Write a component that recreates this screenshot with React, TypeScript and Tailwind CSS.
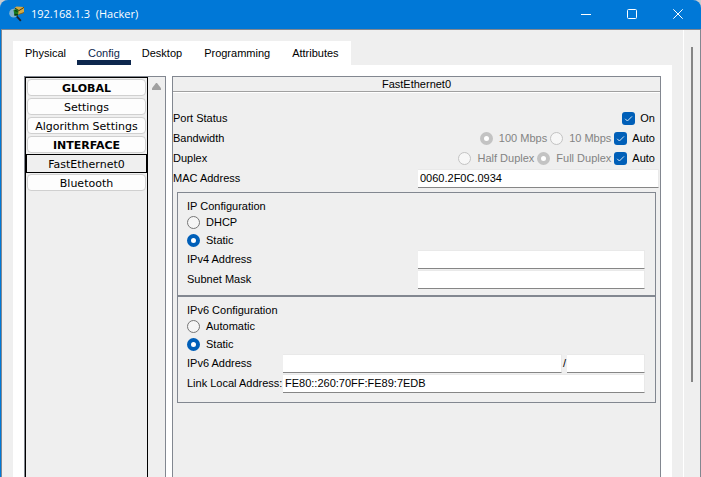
import React from "react";

const SIDEBAR = [
  { label: "GLOBAL", heading: true },
  { label: "Settings" },
  { label: "Algorithm Settings" },
  { label: "INTERFACE", heading: true },
  { label: "FastEthernet0", selected: true },
  { label: "Bluetooth" },
];

const TABS = ["Physical", "Config", "Desktop", "Programming", "Attributes"];

function AppIcon() {
  return (
    <svg width="16" height="16" viewBox="0 0 16 16" aria-hidden="true">
      <path d="M5.5 2 7.5 0.5 15 1v5.5L9.5 8.5 6 6z" fill="#d2a944" />
      <path d="M6 2.2 10 4.6 15 1.4" fill="none" stroke="#4a3a12" strokeWidth="1" />
      <path d="M9.5 8.5 15 6.5" stroke="#7d6320" strokeWidth="1" />
      <circle cx="4.6" cy="7.2" r="4.4" fill="#7fb0cf" />
      <path d="M4.5 4 8 2.8 9.5 5.5 9 9 5.5 10z" fill="#1a7a1c" />
      <path d="M6 4.5 8.5 5.5M5.5 8.5 9 9" stroke="#0c3610" strokeWidth="1.3" />
      <path d="M7.8 10.3 11.8 14.8" stroke="#1b2430" strokeWidth="1.8" />
    </svg>
  );
}

function Radio({ name, label, checked, disabled }: { name: string; label: string; checked?: boolean; disabled?: boolean }) {
  const ring = checked
    ? disabled
      ? "border-4 border-[#c3c3c3] bg-white"
      : "border-4 border-[#005fb8] bg-white"
    : disabled
      ? "border border-[#c3c3c3] bg-[#f7f7f7]"
      : "border border-[#767676] bg-[#f5f5f5]";
  return (
    <label className={`flex items-center gap-1.5 ${disabled ? "text-[#838383]" : "text-black"}`}>
      <input
        type="radio"
        name={name}
        defaultChecked={checked}
        disabled={disabled}
        className={`size-[13px] shrink-0 appearance-none rounded-full ${ring}`}
      />
      <span>{label}</span>
    </label>
  );
}

function Check({ label }: { label: string }) {
  return (
    <label className="flex items-center gap-[5px]">
      <span className="grid size-[13px]">
        <input
          type="checkbox"
          defaultChecked
          className="col-start-1 row-start-1 size-[13px] appearance-none rounded-[3px] bg-[#005fb8]"
        />
        <svg
          className="pointer-events-none col-start-1 row-start-1"
          width="13"
          height="13"
          viewBox="0 0 13 13"
          fill="none"
          stroke="#d5e6f5"
          aria-hidden="true"
        >
          <path d="M3.2 6.8 5.4 9 10 4.4" />
        </svg>
      </span>
      <span>{label}</span>
    </label>
  );
}

function Field({ id, value = "", className, label }: { id: string; value?: string; className: string; label?: string }) {
  return (
    <input
      id={id}
      type="text"
      defaultValue={value}
      aria-label={label}
      className={`h-[19px] min-w-0 border-t border-r border-b border-t-[#e9e9e9] border-r-[#e9e9e9] border-b-[#868686] bg-white px-0.5 text-[11px] outline-none ${className}`}
    />
  );
}

export default function App() {
  return (
    <div className="flex h-screen flex-col overflow-hidden bg-[#c9ccd0] font-['Liberation_Sans',Arial,sans-serif] text-[11px] leading-[14px] text-black">
      <div className="flex min-h-0 flex-1 flex-col overflow-hidden rounded-t-lg border-l border-[#0078d7] bg-[#0078d7]">
        <header className="flex h-[29px] shrink-0 items-center pr-[18px] pb-0.5 pl-2">
          <AppIcon />
          <h1 className="ml-1.5 flex-1 font-['Open_Sans','Noto_Sans',sans-serif] text-[11px] leading-4 font-normal whitespace-pre text-white">
            {"192.168.1.3  (Hacker)"}
          </h1>
          <div className="flex gap-9">
            <button type="button" aria-label="Minimize">
              <svg width="10" height="10" viewBox="0 0 10 10" stroke="#fff" fill="none">
                <path d="M0 5.5h10" />
              </svg>
            </button>
            <button type="button" aria-label="Maximize">
              <svg width="10" height="10" viewBox="0 0 10 10" stroke="#fff" fill="none">
                <rect x="0.5" y="0.5" width="9" height="9" rx="1" />
              </svg>
            </button>
            <button type="button" aria-label="Close">
              <svg width="10" height="10" viewBox="0 0 10 10" stroke="#fff" fill="none">
                <path d="M0.3 0.3 9.7 9.7M9.7 0.3 0.3 9.7" />
              </svg>
            </button>
          </div>
        </header>

        <div className="flex min-h-0 flex-1 border-x border-t border-[#828790] bg-[#efefef]">
          <div className="flex min-w-0 flex-1 flex-col px-[11px] pt-[11px]">
            <nav className="flex h-6 shrink-0 self-start bg-white px-px">
              {TABS.map((tab) => (
                <button
                  key={tab}
                  type="button"
                  className={`flex items-center border-b-[5px] px-[11px] pt-[5px] ${
                    tab === "Config" ? "border-[#0d274d] text-[#0d274d]" : "border-white"
                  }`}
                >
                  {tab}
                </button>
              ))}
            </nav>

            <div className="flex min-h-0 flex-1 gap-1.5 bg-white px-[11px] pt-[11px]">
              <aside className="flex w-[142px] shrink-0 border-x border-t border-[#828790] bg-[#efefef]">
                <ul className="w-[123px] border-x border-t border-black font-['DejaVu_Sans',Verdana,sans-serif] text-[11px]">
                  {SIDEBAR.map((item) => (
                    <li key={item.label} className={`h-[19px] ${item.selected ? "" : "p-px"}`}>
                      <button
                        type="button"
                        className={`flex size-full items-center justify-center whitespace-nowrap ${
                          item.selected
                            ? "border border-black bg-[#efefef] pt-[3px]"
                            : "rounded-[4px] border border-[#d0d0d0] bg-[#fdfdfd] pt-0.5"
                        } ${item.heading ? "font-bold" : ""}`}
                      >
                        {item.label}
                      </button>
                    </li>
                  ))}
                </ul>
                <div className="flex flex-1 justify-center pt-1.5">
                  <svg width="9" height="7" viewBox="0 0 9 7" fill="#a0a0a0" aria-hidden="true">
                    <path d="M4 0h1l4 5.2V7H0V5.2z" />
                  </svg>
                </div>
              </aside>

              <main className="min-w-0 flex-1 border-x border-t border-[#828790] bg-[#efefef]">
                <h2 className="border-b border-[#a0a0a0] text-center">FastEthernet0</h2>
                <div className="border-t border-white pt-[15px]">
                  <div className="flex h-5 items-center justify-between pr-[5px]">
                    <span>Port Status</span>
                    <Check label="On" />
                  </div>
                  <div className="flex h-5 items-center gap-[3px] pr-[5px]">
                    <span className="flex-1">Bandwidth</span>
                    <Radio name="bandwidth" label="100 Mbps" checked disabled />
                    <Radio name="bandwidth" label="10 Mbps" disabled />
                    <Check label="Auto" />
                  </div>
                  <div className="flex h-5 items-center gap-[3px] pr-[5px]">
                    <span className="flex-1">Duplex</span>
                    <Radio name="duplex" label="Half Duplex" disabled />
                    <Radio name="duplex" label="Full Duplex" checked disabled />
                    <Check label="Auto" />
                  </div>
                  <div className="flex h-5 items-center pr-px">
                    <label htmlFor="mac" className="w-[245px]">MAC Address</label>
                    <Field id="mac" value="0060.2F0C.0934" className="flex-1" />
                  </div>

                  <div className="mx-1 mt-1">
                    <section className="border border-[#828790] pt-1.5 pr-2.5 pb-1.5 pl-[9px]">
                      <h3>IP Configuration</h3>
                      <div className="flex h-[18px] items-center">
                        <Radio name="ipv4" label="DHCP" />
                      </div>
                      <div className="flex h-[18px] items-center">
                        <Radio name="ipv4" label="Static" checked />
                      </div>
                      <div className="flex h-5 items-center">
                        <label htmlFor="ipv4-address" className="w-[231px]">IPv4 Address</label>
                        <Field id="ipv4-address" className="flex-1" />
                      </div>
                      <div className="flex h-5 items-center">
                        <label htmlFor="subnet" className="w-[231px]">Subnet Mask</label>
                        <Field id="subnet" className="flex-1" />
                      </div>
                    </section>

                    <section className="border border-[#828790] pt-1.5 pr-2.5 pb-[9px] pl-[9px]">
                      <h3>IPv6 Configuration</h3>
                      <div className="flex h-[18px] items-center">
                        <Radio name="ipv6" label="Automatic" />
                      </div>
                      <div className="flex h-[18px] items-center">
                        <Radio name="ipv6" label="Static" checked />
                      </div>
                      <div className="flex h-5 items-center">
                        <label htmlFor="ipv6-address" className="w-24">IPv6 Address</label>
                        <Field id="ipv6-address" className="flex-1" />
                        <span className="w-[5px] text-center">/</span>
                        <Field id="ipv6-prefix" label="Prefix length" className="w-[78px]" />
                      </div>
                      <div className="flex h-5 items-center">
                        <label htmlFor="link-local" className="w-24 whitespace-nowrap">Link Local Address:</label>
                        <Field id="link-local" value="FE80::260:70FF:FE89:7EDB" className="flex-1" />
                      </div>
                    </section>
                  </div>
                </div>
              </main>
            </div>
          </div>

          <div className="flex w-[17px] shrink-0 flex-col border-l border-white pt-[17px] pl-[7px]">
            <div className="h-[78%] w-0.5 bg-[#858585]" />
          </div>
        </div>
      </div>
    </div>
  );
}
